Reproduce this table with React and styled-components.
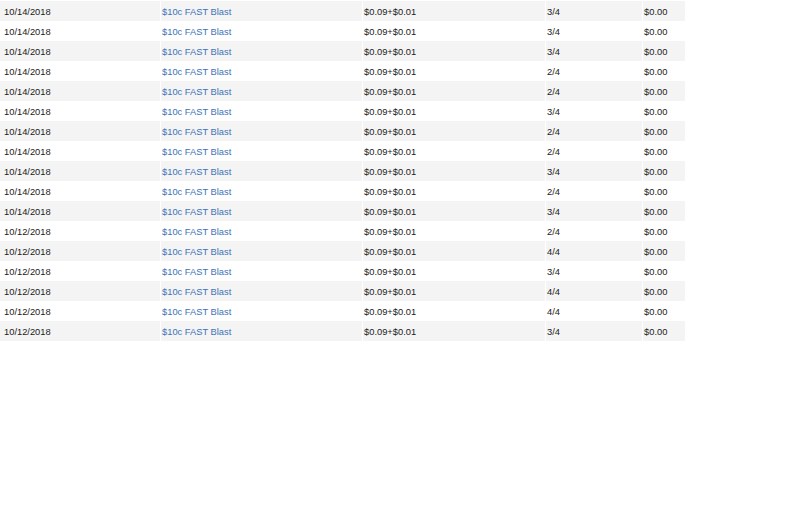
import React from 'react'
import styled, { createGlobalStyle } from 'styled-components'

const GlobalStyle = createGlobalStyle`
	html, body {
		margin: 0;
		padding: 0;
		background: #fff;
	}
	body {
		font-family: "Liberation Sans", Arial, sans-serif;
	}
`;

const Table = styled.div`
	width: 685px;
	margin-top: 1px;
	display: flex;
	flex-direction: column;
	font-size: 7pt;
	color: #1a1a1a;
`;

const Row = styled.div`
	display: grid;
	grid-template-columns: 160px 201px 182px 96px 42px;
	column-gap: 1px;
	height: 20px;
`;

const Cell = styled.div`
	background: ${p => (p.$alt ? '#f4f4f4' : '#fff')};
	padding-left: ${p => p.$pad || 1}px;
	padding-top: 2px;
	line-height: 18px;
	white-space: nowrap;
	overflow: hidden;
`;

const Link = styled.a`
	color: #3d73b8;
	text-decoration: none;
	cursor: pointer;
`;

const rows = [
	['10/14/2018', '3/4'],
	['10/14/2018', '3/4'],
	['10/14/2018', '3/4'],
	['10/14/2018', '2/4'],
	['10/14/2018', '2/4'],
	['10/14/2018', '3/4'],
	['10/14/2018', '2/4'],
	['10/14/2018', '2/4'],
	['10/14/2018', '3/4'],
	['10/14/2018', '2/4'],
	['10/14/2018', '3/4'],
	['10/12/2018', '2/4'],
	['10/12/2018', '4/4'],
	['10/12/2018', '3/4'],
	['10/12/2018', '4/4'],
	['10/12/2018', '4/4'],
	['10/12/2018', '3/4'],
];

const App = () => {
	return (
		<>
			<GlobalStyle />
			<Table>
				{rows.map(([date, score], i) => {
					const alt = i % 2 === 0
					return (
						<Row key={i}>
							<Cell $alt={alt} $pad={4}>{date}</Cell>
							<Cell $alt={alt}><Link>$10c FAST Blast</Link></Cell>
							<Cell $alt={alt}>$0.09+$0.01</Cell>
							<Cell $alt={alt}>{score}</Cell>
							<Cell $alt={alt}>$0.00</Cell>
						</Row>
					)
				})}
			</Table>
		</>
	)
};

export default App
